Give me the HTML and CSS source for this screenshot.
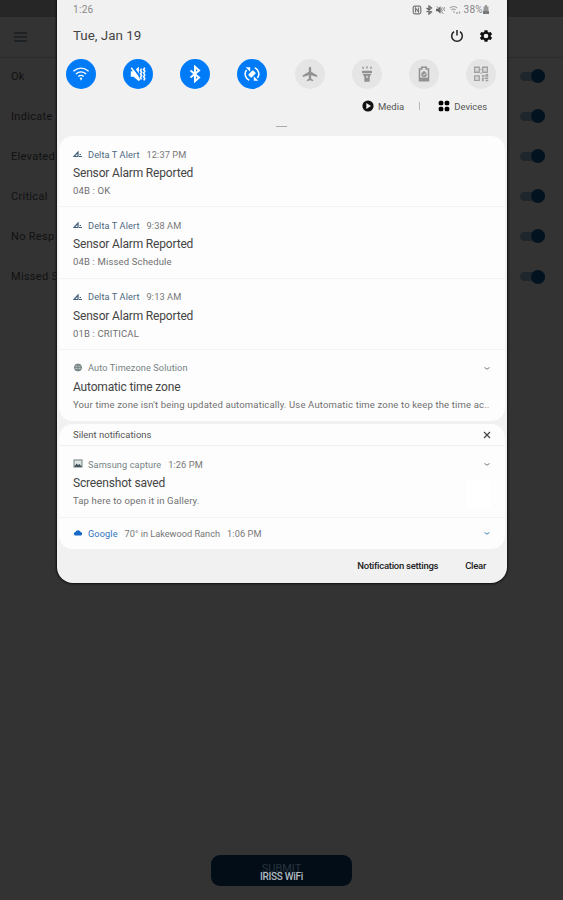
FILE: index.html
```
<!DOCTYPE html>
<html lang="en">
<head>
  <meta charset="UTF-8">
  <title>Delta T Alert</title>
  <link rel="stylesheet" href="styles.css">
</head>
<body>
  <!-- Alert settings screen -->
  <div class="app">
    <div class="app-status"></div>
    <div class="app-bar"><svg width="14" height="10" viewBox="0 0 14 10"><path d="M0 1h13M0 5h13M0 9h13" stroke="#191e21" stroke-width="1.500"/></svg></div>
    <div class="setting"><span>Ok</span><i class="toggle"></i></div>
    <div class="setting"><span>Indicate</span><i class="toggle"></i></div>
    <div class="setting"><span>Elevated</span><i class="toggle"></i></div>
    <div class="setting"><span>Critical</span><i class="toggle"></i></div>
    <div class="setting"><span>No Resp</span><i class="toggle"></i></div>
    <div class="setting"><span>Missed S</span><i class="toggle"></i></div>
    <div class="submit"><span class="submit-label">SUBMIT</span><span class="network">IRISS WiFi</span></div>
  </div>

  <!-- Notification shade -->
  <div class="shade">
    <div class="status">
      <span>1:26</span>
      <div class="status-icons">
        <svg width="10" height="10" viewBox="0 0 10 10"><rect x="1.200" y="1.200" width="7.600" height="7.600" rx="1.500" fill="none" stroke="#777" stroke-width="1.200"/><path d="M3.500 7.500V3l3 4V2.500" fill="none" stroke="#777" stroke-width="1.200"/></svg>
        <svg width="8" height="10" viewBox="0 0 8 10"><path d="M1.500 3l5 4L4 9V1l2.500 2-5 4" fill="none" stroke="#666" stroke-width="1.300"/></svg>
        <svg width="10" height="10" viewBox="0 0 11 10"><path d="M0 3.500h2L5 1v8L2 6.500H0z" fill="#666"/><path d="M1 1l7 8M7 2l-1 2 1 2M9.500 2l-1 2 1 2" fill="none" stroke="#777"/></svg>
        <svg width="12" height="10" viewBox="0 0 12 10"><path d="M1 3q4-3 7 0M2.500 5q2.500-2 4 0M4 7h2M8 7v2M10.500 6.500v2" fill="none" stroke="#999" stroke-width="1.200"/></svg>
        <span class="percent">38%</span>
        <svg width="6" height="9" viewBox="0 0 6 9"><path d="M2 0h2v1.500h1.500V6H.5V1.500H2z" fill="#999"/><path d="M0 6h6v3H0z" fill="#777"/></svg>
      </div>
    </div>

    <div class="date-row">
      <span class="date">Tue, Jan 19</span>
      <svg width="14" height="14" viewBox="0 0 14 14"><path d="M4 2.700a5.300 5.300 0 1 0 6 0M7 1v5.500" fill="none" stroke="#222" stroke-width="1.500"/></svg>
      <svg class="gear" width="14" height="14" viewBox="0 0 24 24"><path fill="#111" fill-rule="evenodd" d="M9.500 2h5l.6 3 1.900 1.100L20 5l2.500 4-2.500 2v2l2.500 2-2.500 4-3-1.100L15.100 19l-.6 3h-5l-.6-3L7 17.900 4 19l-2.500-4L4 13v-2L1.500 9 4 5l3 1.100L8.900 5zM12 8a4 4 0 1 0 0 8 4 4 0 0 0 0-8z"/></svg>
    </div>

    <div class="quick">
      <div class="tile on"><svg viewBox="0 0 20 20"><path d="M1.500 7q8.500-7 17 0M4.300 10q5.700-4.800 11.400 0M7 12.800q3-2.500 6 0" fill="none" stroke="#fff" stroke-width="1.500"/><path d="M8.500 14.500q1.500-1 3 0l-1.500 3z" fill="#fff"/></svg></div>
      <div class="tile on"><svg viewBox="0 0 20 20"><path d="M2 7h3l6-5v16l-6-5H2z" fill="#fff"/><path d="M4 1.500l9 12.500" stroke="#007bf8" stroke-width="2"/><path d="M2.500 3L12 17" stroke="#fff" stroke-width="1.700"/><path d="M14 4l-1.200 2 1.200 2-1.200 2 1.200 2-1.200 2 1.200 2M17.500 3l-1.200 2 1.200 2-1.200 2 1.200 2-1.200 2 1.200 2-1 2" fill="none" stroke="#fff" stroke-width="1.800"/></svg></div>
      <div class="tile on"><svg viewBox="0 0 20 20"><path d="M5 6l9.500 8-4.500 4V2l4.500 4L5 14" fill="none" stroke="#fff" stroke-width="2.200"/></svg></div>
      <div class="tile on"><svg viewBox="0 0 20 20"><path d="M7 17A7.500 7.500 0 0 1 4 5.500M13 3a7.500 7.500 0 0 1 3 11.500" fill="none" stroke="#fff" stroke-width="1.700"/><path d="M3 2.500h5v5zM17 17.500h-5v-5z" fill="#fff"/><rect x="6.200" y="7.500" width="7.600" height="5" rx="1" transform="rotate(-45 10 10)" fill="#fff"/></svg></div>
      <div class="tile"><svg viewBox="0 0 20 20"><path d="M10 2c.9 0 1.300.8 1.300 2v3.500l6.700 4v1.800l-6.700-2v3.900l2.200 1.600V18L10 17l-3.500 1v-1.200l2.200-1.600v-3.900l-6.700 2v-1.800l6.700-4V4c0-1.200.4-2 1.300-2z" fill="#929292"/></svg></div>
      <div class="tile"><svg viewBox="0 0 20 20"><path d="M4.500 6.500h11v2.500h-11zM5 9.800h10l-2 3.200v5.500H7V13z" fill="#929292"/><path d="M10 1.500V4M5 2l1.200 2M15 2l-1.200 2" stroke="#929292" stroke-width="1.500"/><path d="M10 12v2.500" stroke="#eee" stroke-width="1.300"/></svg></div>
      <div class="tile"><svg viewBox="0 0 20 20"><path d="M7.500 2.500h5v2H15v13H5v-13h2.500z" fill="none" stroke="#929292" stroke-width="1.700"/><path d="M5 14h10v3.500H5z" fill="#929292"/><path d="M10 6.500c2 1.500 3 2.500 3 4a3 3 0 0 1-6 0c0-1.500 1-2.500 3-4z" fill="#929292"/><path d="M8.600 10.500l1 1 2-2" fill="none" stroke="#eee"/></svg></div>
      <div class="tile"><svg viewBox="0 0 20 20"><path d="M3 2.500h5v5.500H3zM12 2.500h5v5.500h-5zM3 12h5v5H3z" fill="none" stroke="#a0a0a0" stroke-width="1.500"/><path d="M5 5h1v1H5zM14 5h1v1h-1zM5 14h1v1H5zM11 11h3v2h-3zM15 10h3v3h-3zM11 14h2v4h-2zM14 14h4v1.500h-4zM15 16.500h3V18h-3zM9.500 4h1v2h-1zM9.500 8h1v2h-1z" fill="#a0a0a0"/></svg></div>
    </div>

    <div class="links">
      <svg width="12" height="12" viewBox="0 0 12 12"><circle cx="6" cy="6" r="5.600" fill="#111"/><path d="M4.300 3L9 6 4.300 9z" fill="#f1f1f1"/></svg>
      <span>Media</span>
      <i class="bar"></i>
      <svg width="12" height="12" viewBox="0 0 12 12"><rect x=".7" y=".7" width="4.600" height="4.600" rx="1.500"/><rect x="6.700" y=".7" width="4.600" height="4.600" rx="1.500"/><rect x=".7" y="6.700" width="4.600" height="4.600" rx="1.500"/><rect x="6.700" y="6.700" width="4.600" height="4.600" rx="1.500"/></svg>
      <span class="devices">Devices</span>
    </div>
    <div class="handle"></div>

    <div class="card">
      <div class="note">
        <div class="head"><svg viewBox="0 0 10 10"><path d="M1 7.500l4-4.500v4.500zM6 7.500h3M6.500 5.500h1.500" fill="none" stroke="#40607c" stroke-width="1.200"/></svg><span class="delta">Delta T Alert</span><time>12:37 PM</time></div>
        <div class="title">Sensor Alarm Reported</div>
        <div class="text">04B : OK</div>
      </div>
      <div class="note">
        <div class="head"><svg viewBox="0 0 10 10"><path d="M1 7.500l4-4.500v4.500zM6 7.500h3M6.500 5.500h1.500" fill="none" stroke="#40607c" stroke-width="1.200"/></svg><span class="delta">Delta T Alert</span><time>9:38 AM</time></div>
        <div class="title">Sensor Alarm Reported</div>
        <div class="text">04B : Missed Schedule</div>
      </div>
      <div class="note">
        <div class="head"><svg viewBox="0 0 10 10"><path d="M1 7.500l4-4.500v4.500zM6 7.500h3M6.500 5.500h1.500" fill="none" stroke="#40607c" stroke-width="1.200"/></svg><span class="delta">Delta T Alert</span><time>9:13 AM</time></div>
        <div class="title">Sensor Alarm Reported</div>
        <div class="text">01B : CRITICAL</div>
      </div>
      <div class="note">
        <div class="head"><svg viewBox="0 0 10 10"><circle cx="5" cy="4.500" r="3.500" fill="#b9c1c1" stroke="#738080"/><path d="M1 4.500h8M5 1v7M2 2.700h6M2 6.500h6" stroke="#738080" stroke-width=".8"/></svg><span class="zone">Auto Timezone Solution</span><svg class="chevron" viewBox="0 0 8 8"><path d="M1.500 3.500L4 5.200l2.500-1.700" fill="none" stroke="#777"/></svg></div>
        <div class="title">Automatic time zone</div>
        <div class="text">Your time zone isn't being updated automatically. Use Automatic time zone to keep the time ac..</div>
      </div>
    </div>

    <div class="card silent">
      <div class="silent-head"><span>Silent notifications</span><svg width="8" height="8" viewBox="0 0 8 8"><path d="M1 1l6 6M7 1L1 7" stroke="#444" stroke-width="1.200"/></svg></div>
      <div class="note capture">
        <div class="head"><svg viewBox="0 0 10 10"><rect x="1" y="1" width="8" height="7" fill="#dce4e4" stroke="#71807f"/><path d="M1 8l2.500-3.500L5 6l1.500-1L9 8z" fill="#43545b"/></svg><span class="samsung">Samsung capture</span><time>1:26 PM</time><svg class="chevron" viewBox="0 0 8 8"><path d="M1.500 3.500L4 5.200l2.500-1.700" fill="none" stroke="#777"/></svg></div>
        <div class="title">Screenshot saved</div>
        <div class="text">Tap here to open it in Gallery.</div>
        <div class="thumb"></div>
      </div>
      <div class="note google">
        <div class="head"><svg viewBox="0 0 10 10"><path d="M2.200 7.500a1.800 1.800 0 0 1 .2-3.500 2.800 2.800 0 0 1 5.200 0 1.800 1.800 0 0 1 .4 3.500z" fill="#1769c8"/></svg><span class="brand">Google</span><span class="weather">70° in Lakewood Ranch</span><time>1:06 PM</time><svg class="chevron" viewBox="0 0 8 8"><path d="M1.500 3.500L4 5.200l2.500-1.700" fill="none" stroke="#3c87b8"/></svg></div>
      </div>
    </div>

    <div class="footer"><span>Notification settings</span><span>Clear</span></div>
  </div>
</body>
</html>
```
FILE: styles.css
```
body {
  margin: 0;
  height: 900px;
  overflow: hidden;
  background: #333;
  font-family: Roboto, sans-serif;
  color: #555;
}
svg {
  display: block;
  flex: none;
}
.app {
  display: flex;
  flex-direction: column;
  height: 900px;
  color: #111;
}
.app-status {
  height: 17px;
  background: #262626;
}
.app-bar {
  display: flex;
  align-items: center;
  height: 40px;
  padding-left: 14px;
  border-bottom: 1px solid #2b2b2b;
  margin-bottom: -2px;
}
.setting {
  display: flex;
  align-items: center;
  justify-content: space-between;
  height: 40.1px;
  padding: 0 18px 0 11px;
  font-size: 11px;
  letter-spacing: 0.3px;
}
.toggle {
  display: flex;
  align-items: center;
  justify-content: flex-end;
  width: 25px;
  height: 9px;
  border-radius: 5px;
  background: #20272c;
}
.toggle::after {
  content: "";
  width: 14px;
  height: 14px;
  border-radius: 50%;
  background: #03121f;
}
.submit {
  display: flex;
  flex-direction: column;
  align-items: center;
  box-sizing: border-box;
  width: 141px;
  height: 31px;
  margin: auto auto 14px 211px;
  padding-top: 8px;
  border-radius: 9px;
  background: #020d18;
}
.submit-label {
  font-size: 11px;
  line-height: 12px;
  color: #29333c;
}
/* network toast covers the lower half of the submit label */
.network {
  margin-top: -4px;
  font-size: 10px;
  line-height: 12px;
  font-weight: 500;
  letter-spacing: -0.3px;
  color: #b4bcc2;
}

/* the shade lies over the app */
.shade {
  position: absolute;
  top: 0;
  left: 57px;
  width: 450px;
  height: 583px;
  background: #f1f1f1;
  border-radius: 0 0 16px 16px;
  box-shadow: 0 0 2px 1px #111;
  overflow: hidden;
}
.status {
  display: flex;
  align-items: center;
  justify-content: space-between;
  height: 19px;
  padding: 0 18px 0 16px;
  font-size: 10px;
  letter-spacing: 0.3px;
  color: #888;
}
.status-icons {
  display: flex;
  align-items: center;
  gap: 3px;
}
.percent {
  margin-right: -3px;
}
.date-row {
  display: flex;
  align-items: center;
  height: 33px;
  padding: 0 14px 0 16px;
}
.date {
  flex: 1;
  font-size: 13.4px;
  color: #444;
}
.gear {
  margin-left: 15px;
}
.quick {
  display: flex;
  justify-content: space-between;
  padding: 7px 11px 0 9px;
}
.tile {
  display: flex;
  align-items: center;
  justify-content: center;
  width: 30px;
  height: 30px;
  border-radius: 50%;
  background: #e5e5e5;
}
.tile.on {
  background: #007bf8;
}
.tile svg {
  width: 18px;
  height: 18px;
}
.links {
  display: flex;
  align-items: center;
  height: 16px;
  margin-top: 9px;
  padding-left: 305px;
  font-size: 9.5px;
  color: #555;
}
.links span {
  margin-left: 4px;
}
.bar {
  width: 1px;
  height: 8px;
  margin: 0 18px 0 15px;
  background: #bbb;
}
.handle {
  width: 11px;
  height: 1px;
  margin: 12px 0 9px 219px;
  background: #aaa;
}
.card {
  box-sizing: border-box;
  height: 285px;
  margin: 0 2px;
  border-radius: 14px;
  background: #fdfdfd;
  overflow: hidden;
}
.note {
  box-sizing: border-box;
  height: 71.3px;
  padding: 12px 14px 0;
  border-bottom: 1px solid #f3f3f3;
}
.note:last-child {
  border-bottom: none;
}
.head {
  display: flex;
  align-items: center;
  height: 12px;
  font-size: 9.2px;
  letter-spacing: 0.1px;
  color: #777;
}
.head svg {
  width: 10px;
  height: 10px;
}
.head span {
  margin-left: 5px;
}
.head time {
  margin-left: 7px;
}
.head .chevron {
  width: 8px;
  height: 8px;
  margin-left: auto;
}
.delta {
  color: #4d6881;
}
.zone, .samsung {
  color: #778384;
}
.title {
  margin-top: 5px;
  font-size: 12px;
  line-height: 17px;
  letter-spacing: -0.17px;
  color: #444;
}
.text {
  margin-top: 3px;
  font-size: 9.5px;
  line-height: 12px;
  letter-spacing: 0.15px;
  color: #707070;
  white-space: nowrap;
}
.silent {
  height: 125px;
  margin-top: 3px;
}
.silent-head {
  display: flex;
  align-items: center;
  justify-content: space-between;
  box-sizing: border-box;
  height: 22px;
  padding: 0 14px;
  border-bottom: 1px solid #f0f0f0;
  font-size: 9.5px;
  color: #555;
}
.capture {
  position: relative;
  height: 72px;
}
/* blank preview beside the capture notice */
.thumb {
  position: absolute;
  right: 14px;
  top: 34px;
  width: 24px;
  height: 28px;
  background: #fff;
}
.google {
  height: 31px;
  padding-top: 9px;
}
.brand {
  color: #3274bd;
}
.head .weather {
  margin-left: 7px;
  letter-spacing: 0;
}
.footer {
  display: flex;
  align-items: center;
  justify-content: flex-end;
  gap: 27px;
  height: 32px;
  padding-right: 21px;
  font-size: 9.5px;
  font-weight: 500;
  letter-spacing: -0.27px;
  color: #222;
}
```
